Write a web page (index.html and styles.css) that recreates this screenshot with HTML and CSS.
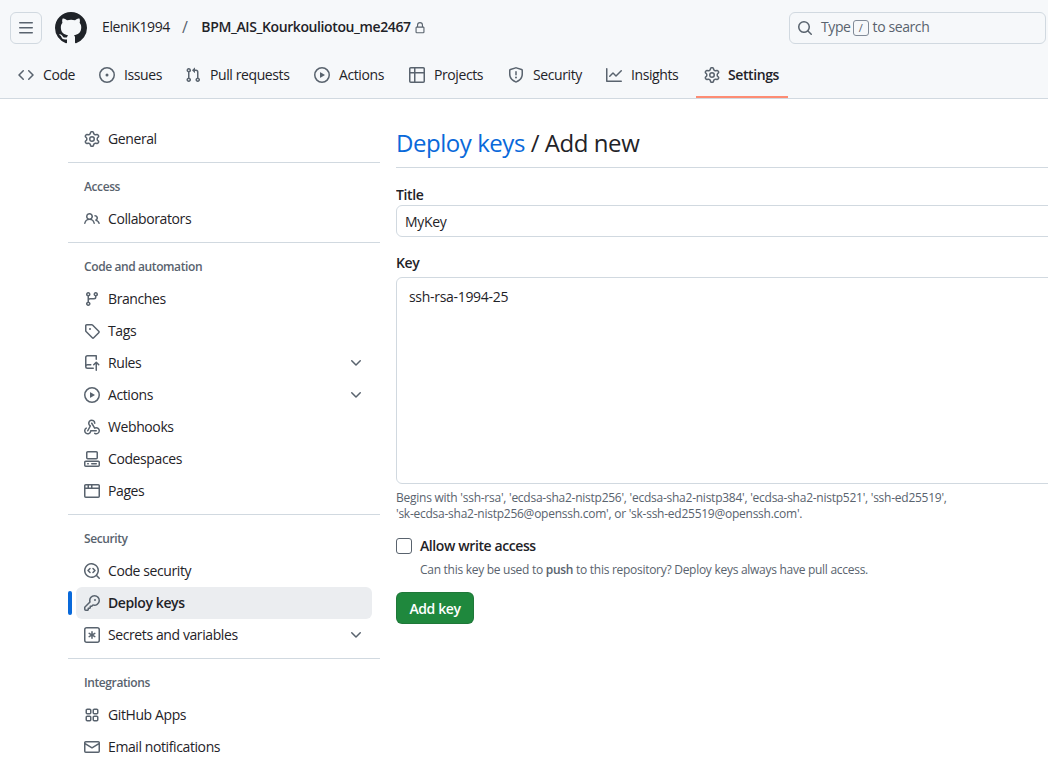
FILE: index.html

```html
<!DOCTYPE html>
<html lang="en">
<head>
  <meta charset="UTF-8">
  <title>Add deploy key</title>
  <link rel="stylesheet" href="styles.css">
</head>
<body>
  <svg class="sprite" xmlns="http://www.w3.org/2000/svg">
    <symbol id="i-bars" viewBox="0 0 16 16"><path d="M1 2.75A.75.75 0 0 1 1.75 2h12.5a.75.75 0 0 1 0 1.5H1.75A.75.75 0 0 1 1 2.75Zm0 5A.75.75 0 0 1 1.75 7h12.5a.75.75 0 0 1 0 1.5H1.75A.75.75 0 0 1 1 7.75ZM1.75 12h12.5a.75.75 0 0 1 0 1.5H1.75a.75.75 0 0 1 0-1.5Z"/></symbol>
    <symbol id="i-mark" viewBox="0 0 16 16"><path d="M8 0c4.42 0 8 3.58 8 8a8.013 8.013 0 0 1-5.45 7.59c-.4.08-.55-.17-.55-.38 0-.27.01-1.13.01-2.2 0-.75-.25-1.23-.54-1.48 1.78-.2 3.65-.88 3.65-3.95 0-.88-.31-1.59-.82-2.15.08-.2.36-1.02-.08-2.12 0 0-.67-.22-2.2.82-.64-.18-1.32-.27-2-.27-.68 0-1.36.09-2 .27-1.53-1.03-2.2-.82-2.2-.82-.44 1.1-.16 1.92-.08 2.12-.51.56-.82 1.28-.82 2.15 0 3.06 1.86 3.75 3.64 3.95-.23.2-.44.55-.51 1.07-.46.21-1.61.55-2.33-.66-.15-.24-.6-.83-1.23-.82-.67.01-.27.38.01.53.34.19.73.9.82 1.13.16.45.68 1.31 2.69.94 0 .67.01 1.3.01 1.49 0 .21-.15.45-.55.38A7.995 7.995 0 0 1 0 8c0-4.42 3.58-8 8-8Z"/></symbol>
    <symbol id="i-lock" viewBox="0 0 16 16"><path d="M4 4a4 4 0 0 1 8 0v2h.25c.966 0 1.75.784 1.75 1.75v5.5A1.75 1.75 0 0 1 12.25 15h-8.5A1.75 1.75 0 0 1 2 13.25v-5.5C2 6.784 2.784 6 3.75 6H4Zm8.25 3.5h-8.5a.25.25 0 0 0-.25.25v5.5c0 .138.112.25.25.25h8.5a.25.25 0 0 0 .25-.25v-5.5a.25.25 0 0 0-.25-.25ZM10.5 6V4a2.5 2.5 0 1 0-5 0v2Z"/></symbol>
    <symbol id="i-search" viewBox="0 0 16 16"><path d="M10.68 11.74a6 6 0 0 1-7.922-8.982 6 6 0 0 1 8.982 7.922l3.04 3.04a.749.749 0 0 1-.326 1.275.749.749 0 0 1-.734-.215ZM11.5 7a4.499 4.499 0 1 0-8.997 0A4.499 4.499 0 0 0 11.5 7Z"/></symbol>
    <symbol id="i-code" viewBox="0 0 16 16"><path d="m11.28 3.22 4.25 4.25a.75.75 0 0 1 0 1.06l-4.25 4.25a.749.749 0 0 1-1.275-.326.749.749 0 0 1 .215-.734L13.94 8l-3.72-3.72a.749.749 0 0 1 .326-1.275.749.749 0 0 1 .734.215Zm-6.56 0a.751.751 0 0 1 1.042.018.751.751 0 0 1 .018 1.042L2.06 8l3.72 3.72a.749.749 0 0 1-.326 1.275.749.749 0 0 1-.734-.215L.47 8.53a.75.75 0 0 1 0-1.06Z"/></symbol>
    <symbol id="i-issue" viewBox="0 0 16 16"><path d="M8 9.5a1.5 1.5 0 1 0 0-3 1.5 1.5 0 0 0 0 3Z"/><path d="M8 0a8 8 0 1 1 0 16A8 8 0 0 1 8 0ZM1.5 8a6.5 6.5 0 1 0 13 0 6.5 6.5 0 0 0-13 0Z"/></symbol>
    <symbol id="i-pr" viewBox="0 0 16 16"><path d="M1.5 3.25a2.25 2.25 0 1 1 3 2.122v5.256a2.251 2.251 0 1 1-1.5 0V5.372A2.25 2.25 0 0 1 1.5 3.25Zm5.677-.177L9.573.677A.25.25 0 0 1 10 .854V2.5h1A2.5 2.5 0 0 1 13.5 5v5.628a2.251 2.251 0 1 1-1.5 0V5a1 1 0 0 0-1-1h-1v1.646a.25.25 0 0 1-.427.177L7.177 3.427a.25.25 0 0 1 0-.354ZM3.75 2.5a.75.75 0 1 0 0 1.5.75.75 0 0 0 0-1.5Zm0 9.5a.75.75 0 1 0 0 1.5.75.75 0 0 0 0-1.5Zm8.25.75a.75.75 0 1 0 1.5 0 .75.75 0 0 0-1.5 0Z"/></symbol>
    <symbol id="i-play" viewBox="0 0 16 16"><path d="M8 0a8 8 0 1 1 0 16A8 8 0 0 1 8 0ZM1.5 8a6.5 6.5 0 1 0 13 0 6.5 6.5 0 0 0-13 0Zm4.879-2.773 4.264 2.559a.25.25 0 0 1 0 .428l-4.264 2.559A.25.25 0 0 1 6 10.559V5.442a.25.25 0 0 1 .379-.215Z"/></symbol>
    <symbol id="i-table" viewBox="0 0 16 16"><path d="M0 1.75C0 .784.784 0 1.75 0h12.5C15.216 0 16 .784 16 1.75v12.5A1.75 1.75 0 0 1 14.25 16H1.75A1.75 1.75 0 0 1 0 14.25ZM6.5 6.5v8h7.75a.25.25 0 0 0 .25-.25V6.5Zm8-1.5V1.75a.25.25 0 0 0-.25-.25H6.5V5Zm-13 1.5v7.75c0 .138.112.25.25.25H5v-8ZM5 5V1.5H1.75a.25.25 0 0 0-.25.25V5Z"/></symbol>
    <symbol id="i-shield" viewBox="0 0 16 16"><path d="M7.467.133a1.748 1.748 0 0 1 1.066 0l5.25 1.68A1.75 1.75 0 0 1 15 3.48V7c0 1.566-.32 3.182-1.303 4.682-.983 1.498-2.585 2.813-5.032 3.855a1.697 1.697 0 0 1-1.33 0c-2.447-1.042-4.049-2.357-5.032-3.855C1.32 10.182 1 8.566 1 7V3.48a1.75 1.75 0 0 1 1.217-1.667Zm.61 1.429a.25.25 0 0 0-.153 0l-5.25 1.68a.25.25 0 0 0-.174.238V7c0 1.358.275 2.666 1.057 3.86.784 1.194 2.121 2.34 4.366 3.297a.196.196 0 0 0 .154 0c2.245-.956 3.582-2.104 4.366-3.298C13.225 9.666 13.5 8.36 13.5 7V3.48a.251.251 0 0 0-.174-.237l-5.25-1.68ZM8.75 4.75v3a.75.75 0 0 1-1.5 0v-3a.75.75 0 0 1 1.5 0ZM9 10.5a1 1 0 1 1-2 0 1 1 0 0 1 2 0Z"/></symbol>
    <symbol id="i-graph" viewBox="0 0 16 16"><path d="M1.5 1.75V13.5h13.75a.75.75 0 0 1 0 1.5H.75a.75.75 0 0 1-.75-.75V1.75a.75.75 0 0 1 1.5 0Zm14.28 2.53-5.25 5.25a.75.75 0 0 1-1.06 0L7 7.06 4.28 9.78a.751.751 0 0 1-1.042-.018.751.751 0 0 1-.018-1.042l3.25-3.25a.75.75 0 0 1 1.06 0L10 7.94l4.72-4.72a.751.751 0 0 1 1.042.018.751.751 0 0 1 .018 1.042Z"/></symbol>
    <symbol id="i-gear" viewBox="0 0 16 16"><path d="M8 0a8.2 8.2 0 0 1 .701.031C9.444.095 9.99.645 10.16 1.29l.288 1.107c.018.066.079.158.212.224.231.114.454.243.668.386.123.082.233.09.299.071l1.103-.303c.644-.176 1.392.021 1.82.63.27.385.506.792.704 1.218.315.675.111 1.422-.364 1.891l-.814.806c-.049.048-.098.147-.088.294.016.257.016.515 0 .772-.01.147.038.246.088.294l.814.806c.475.469.679 1.216.364 1.891a7.977 7.977 0 0 1-.704 1.217c-.428.61-1.176.807-1.82.63l-1.102-.302c-.067-.019-.177-.011-.3.071a5.909 5.909 0 0 1-.668.386c-.133.066-.194.158-.211.224l-.29 1.106c-.168.646-.715 1.196-1.458 1.26a8.006 8.006 0 0 1-1.402 0c-.743-.064-1.289-.614-1.458-1.26l-.289-1.106c-.018-.066-.079-.158-.212-.224a5.738 5.738 0 0 1-.668-.386c-.123-.082-.233-.09-.299-.071l-1.103.303c-.644.176-1.392-.021-1.82-.63a8.12 8.12 0 0 1-.704-1.218c-.315-.675-.111-1.422.363-1.891l.815-.806c.05-.048.098-.147.088-.294a6.214 6.214 0 0 1 0-.772c.01-.147-.038-.246-.088-.294l-.815-.806C.635 6.045.431 5.298.746 4.623a7.92 7.92 0 0 1 .704-1.217c.428-.61 1.176-.807 1.82-.63l1.102.302c.067.019.177.011.3-.071.214-.143.437-.272.668-.386.133-.066.194-.158.211-.224l.29-1.106C6.009.645 6.556.095 7.299.03 7.53.01 7.764 0 8 0Zm-.571 1.525c-.036.003-.108.036-.137.146l-.289 1.105c-.147.561-.549.967-.998 1.189-.173.086-.34.183-.5.29-.417.278-.97.423-1.529.27l-1.103-.303c-.109-.03-.175.016-.195.045-.22.312-.412.644-.573.99-.014.031-.021.11.059.19l.815.806c.411.406.562.957.53 1.456a4.709 4.709 0 0 0 0 .582c.032.499-.119 1.05-.53 1.456l-.815.806c-.081.08-.073.159-.059.19.162.346.353.677.573.989.02.03.085.076.195.046l1.102-.303c.56-.153 1.113-.008 1.53.27.161.107.328.204.501.29.447.222.85.629.997 1.189l.289 1.105c.029.109.101.143.137.146a6.6 6.6 0 0 0 1.142 0c.036-.003.108-.036.137-.146l.289-1.105c.147-.561.549-.967.998-1.189.173-.086.34-.183.5-.29.417-.278.97-.423 1.529-.27l1.103.303c.109.029.175-.016.195-.045.22-.313.411-.644.573-.99.014-.031.021-.11-.059-.19l-.815-.806c-.411-.406-.562-.957-.53-1.456a4.709 4.709 0 0 0 0-.582c-.032-.499.119-1.05.53-1.456l.815-.806c.081-.08.073-.159.059-.19a6.464 6.464 0 0 0-.573-.989c-.02-.03-.085-.076-.195-.046l-1.102.303c-.56.153-1.113.008-1.53-.27a4.44 4.44 0 0 0-.501-.29c-.447-.222-.85-.629-.997-1.189l-.289-1.105c-.029-.11-.101-.143-.137-.146a6.6 6.6 0 0 0-1.142 0ZM11 8a3 3 0 1 1-6 0 3 3 0 0 1 6 0ZM9.5 8a1.5 1.5 0 1 0-3.001.001A1.5 1.5 0 0 0 9.5 8Z"/></symbol>
    <symbol id="i-people" viewBox="0 0 16 16"><path d="M2 5.5a3.5 3.5 0 1 1 5.898 2.549 5.508 5.508 0 0 1 3.034 4.084.75.75 0 1 1-1.482.235 4 4 0 0 0-7.9 0 .75.75 0 0 1-1.482-.236A5.507 5.507 0 0 1 3.102 8.05 3.493 3.493 0 0 1 2 5.5ZM11 4a3.001 3.001 0 0 1 2.22 5.018 5.01 5.01 0 0 1 2.56 3.012.749.749 0 0 1-.885.954.752.752 0 0 1-.549-.514 3.507 3.507 0 0 0-2.522-2.372.75.75 0 0 1-.574-.73v-.352a.75.75 0 0 1 .416-.672A1.5 1.5 0 0 0 11 5.5.75.75 0 0 1 11 4Zm-5.5-.5a2 2 0 1 0-.001 3.999A2 2 0 0 0 5.5 3.5Z"/></symbol>
    <symbol id="i-branch" viewBox="0 0 16 16"><path d="M9.5 3.25a2.25 2.25 0 1 1 3 2.122V6A2.5 2.5 0 0 1 10 8.5H6a1 1 0 0 0-1 1v1.128a2.251 2.251 0 1 1-1.5 0V5.372a2.25 2.25 0 1 1 1.5 0v1.836A2.493 2.493 0 0 1 6 7h4a1 1 0 0 0 1-1v-.628A2.25 2.25 0 0 1 9.5 3.25Zm-6 0a.75.75 0 1 0 1.5 0 .75.75 0 0 0-1.5 0Zm8.25-.75a.75.75 0 1 0 0 1.5.75.75 0 0 0 0-1.5ZM4.25 12a.75.75 0 1 0 0 1.5.75.75 0 0 0 0-1.5Z"/></symbol>
    <symbol id="i-tag" viewBox="0 0 16 16"><path d="M1 7.775V2.75C1 1.784 1.784 1 2.75 1h5.025c.464 0 .91.184 1.238.513l6.25 6.25a1.75 1.75 0 0 1 0 2.474l-5.026 5.026a1.75 1.75 0 0 1-2.474 0l-6.25-6.25A1.752 1.752 0 0 1 1 7.775Zm1.5 0c0 .066.026.13.073.177l6.25 6.25a.25.25 0 0 0 .354 0l5.025-5.025a.25.25 0 0 0 0-.354l-6.25-6.25a.25.25 0 0 0-.177-.073H2.75a.25.25 0 0 0-.25.25ZM6 5a1 1 0 1 1 0 2 1 1 0 0 1 0-2Z"/></symbol>
    <symbol id="i-push" viewBox="0 0 16 16"><path d="M1 2.5A2.5 2.5 0 0 1 3.5 0h8.75a.75.75 0 0 1 .75.75v3.5a.75.75 0 0 1-1.5 0V1.5h-8a1 1 0 0 0-1 1v6.708A2.493 2.493 0 0 1 3.5 9h3.25a.75.75 0 0 1 0 1.5H3.5a1 1 0 0 0 0 2h5.75a.75.75 0 0 1 0 1.5H3.5A2.5 2.5 0 0 1 1 11.5Zm13.23 7.79h-.001l-1.224-1.224v6.184a.75.75 0 0 1-1.5 0V9.066L10.28 10.29a.75.75 0 0 1-1.06-1.061l2.505-2.504a.75.75 0 0 1 1.06 0L15.29 9.23a.751.751 0 0 1-.018 1.042.751.751 0 0 1-1.042.018Z"/></symbol>
    <symbol id="i-webhook" viewBox="0 0 16 16"><path d="M5.5 4.25a2.25 2.25 0 0 1 4.5 0 .75.75 0 0 0 1.5 0 3.75 3.75 0 1 0-6.14 2.889l-2.272 4.258a.75.75 0 0 0 1.324.706L7 7.25a.75.75 0 0 0-.309-1.015A2.25 2.25 0 0 1 5.5 4.25Z"/><path d="M7.364 3.607a.75.75 0 0 1 1.03.257l2.608 4.349a3.75 3.75 0 1 1-.628 6.785.75.75 0 0 1 .752-1.299 2.25 2.25 0 1 0-.033-3.88.75.75 0 0 1-1.03-.256L7.107 4.636a.75.75 0 0 1 .257-1.03Z"/><path d="M2.9 8.776A.75.75 0 0 1 2.625 9.8 2.25 2.25 0 1 0 6 11.75a.75.75 0 0 1 .75-.751h5.5a.75.75 0 0 1 0 1.5H7.425a3.751 3.751 0 1 1-5.55-3.998.75.75 0 0 1 1.024.274Z"/></symbol>
    <symbol id="i-codespaces" viewBox="0 0 16 16"><path d="M0 11.25c0-.966.784-1.75 1.75-1.75h12.5c.966 0 1.75.784 1.75 1.75v3A1.75 1.75 0 0 1 14.25 16H1.75A1.75 1.75 0 0 1 0 14.25Zm2-9.5C2 .784 2.784 0 3.75 0h8.5C13.216 0 14 .784 14 1.75v5a1.75 1.75 0 0 1-1.75 1.75h-8.5A1.75 1.75 0 0 1 2 6.75Zm1.75-.25a.25.25 0 0 0-.25.25v5c0 .138.112.25.25.25h8.5a.25.25 0 0 0 .25-.25v-5a.25.25 0 0 0-.25-.25Zm-2 9.5a.25.25 0 0 0-.25.25v3c0 .138.112.25.25.25h12.5a.25.25 0 0 0 .25-.25v-3a.25.25 0 0 0-.25-.25Z"/><path d="M7 12.75a.75.75 0 0 1 .75-.75h4.5a.75.75 0 0 1 0 1.5h-4.5a.75.75 0 0 1-.75-.75Zm-4 0a.75.75 0 0 1 .75-.75h.5a.75.75 0 0 1 0 1.5h-.5a.75.75 0 0 1-.75-.75Z"/></symbol>
    <symbol id="i-browser" viewBox="0 0 16 16"><path d="M0 2.75C0 1.784.784 1 1.75 1h12.5c.966 0 1.75.784 1.75 1.75v10.5A1.75 1.75 0 0 1 14.25 15H1.75A1.75 1.75 0 0 1 0 13.25ZM14.5 6h-13v7.25c0 .138.112.25.25.25h12.5a.25.25 0 0 0 .25-.25Zm-6-3.5v2h6V2.75a.25.25 0 0 0-.25-.25ZM5 2.5v2h2v-2Zm-3.25 0a.25.25 0 0 0-.25.25V4.5H3.5v-2Z"/></symbol>
    <symbol id="i-codescan" viewBox="0 0 16 16"><path d="M8.47 4.97a.75.75 0 0 0 0 1.06L9.94 7.5 8.47 8.97a.75.75 0 1 0 1.06 1.06l2-2a.75.75 0 0 0 0-1.06l-2-2a.75.75 0 0 0-1.06 0ZM6.53 6.03a.75.75 0 0 0-1.06-1.06l-2 2a.75.75 0 0 0 0 1.06l2 2a.75.75 0 1 0 1.06-1.06L5.06 7.5l1.47-1.47Z"/><path d="M12.246 13.307a7.501 7.501 0 1 1 1.06-1.06l2.474 2.473a.749.749 0 0 1-.326 1.275.749.749 0 0 1-.734-.215ZM1.5 7.5a6.002 6.002 0 0 0 3.608 5.504 6.002 6.002 0 0 0 6.486-1.117.748.748 0 0 1 .292-.293A6 6 0 1 0 1.5 7.5Z"/></symbol>
    <symbol id="i-key" viewBox="0 0 16 16"><path d="M10.5 0a5.499 5.499 0 1 1-1.288 10.848l-.932.932a.749.749 0 0 1-.53.22H7v.75a.749.749 0 0 1-.22.53l-.5.5a.749.749 0 0 1-.53.22H5v.75a.749.749 0 0 1-.22.53l-.5.5a.749.749 0 0 1-.53.22h-2A1.75 1.75 0 0 1 0 14.25v-2c0-.199.079-.389.22-.53l4.932-4.932A5.5 5.5 0 0 1 10.5 0Zm-4 5.5c-.001.431.069.86.205 1.269a.75.75 0 0 1-.181.768L1.5 12.56v1.69c0 .138.112.25.25.25h1.69l.06-.06v-1.19a.75.75 0 0 1 .75-.75h1.19l.06-.06v-1.19a.75.75 0 0 1 .75-.75h1.19l1.023-1.025a.75.75 0 0 1 .768-.18A4 4 0 1 0 6.5 5.5ZM11 6a1 1 0 1 1 0-2 1 1 0 0 1 0 2Z"/></symbol>
    <symbol id="i-asterisk" viewBox="0 0 16 16"><path d="M0 2.75A2.75 2.75 0 0 1 2.75 0h10.5A2.75 2.75 0 0 1 16 2.75v10.5A2.75 2.75 0 0 1 13.25 16H2.75A2.75 2.75 0 0 1 0 13.25ZM2.75 1.5c-.69 0-1.25.56-1.25 1.25v10.5c0 .69.56 1.25 1.25 1.25h10.5c.69 0 1.25-.56 1.25-1.25V2.75c0-.69-.56-1.25-1.25-1.25Z"/><path d="M8 4a.75.75 0 0 1 .75.75V6.7l1.69-.975a.75.75 0 0 1 .75 1.3L9.5 8l1.69.976a.75.75 0 0 1-.75 1.298L8.75 9.3v1.951a.75.75 0 0 1-1.5 0V9.299l-1.69.976a.75.75 0 0 1-.75-1.3L6.5 8l-1.69-.975a.75.75 0 0 1 .75-1.3l1.69.976V4.75A.75.75 0 0 1 8 4Z"/></symbol>
    <symbol id="i-apps" viewBox="0 0 16 16"><path d="M1.5 3.25c0-.966.784-1.75 1.75-1.75h2.5c.966 0 1.75.784 1.75 1.75v2.5A1.75 1.75 0 0 1 5.75 7.5h-2.5A1.75 1.75 0 0 1 1.5 5.75Zm7 0c0-.966.784-1.75 1.75-1.75h2.5c.966 0 1.75.784 1.75 1.75v2.5a1.75 1.75 0 0 1-1.75 1.75h-2.5A1.75 1.75 0 0 1 8.5 5.75Zm-7 7c0-.966.784-1.75 1.75-1.75h2.5c.966 0 1.75.784 1.75 1.75v2.5a1.75 1.75 0 0 1-1.75 1.75h-2.5a1.75 1.75 0 0 1-1.75-1.75Zm7 0c0-.966.784-1.75 1.75-1.75h2.5c.966 0 1.75.784 1.75 1.75v2.5a1.75 1.75 0 0 1-1.75 1.75h-2.5a1.75 1.75 0 0 1-1.75-1.75ZM3.25 3a.25.25 0 0 0-.25.25v2.5c0 .138.112.25.25.25h2.5A.25.25 0 0 0 6 5.75v-2.5A.25.25 0 0 0 5.75 3Zm7 0a.25.25 0 0 0-.25.25v2.5c0 .138.112.25.25.25h2.5a.25.25 0 0 0 .25-.25v-2.5a.25.25 0 0 0-.25-.25ZM3.25 10a.25.25 0 0 0-.25.25v2.5c0 .138.112.25.25.25h2.5a.25.25 0 0 0 .25-.25v-2.5a.25.25 0 0 0-.25-.25Zm7 0a.25.25 0 0 0-.25.25v2.5c0 .138.112.25.25.25h2.5a.25.25 0 0 0 .25-.25v-2.5a.25.25 0 0 0-.25-.25Z"/></symbol>
    <symbol id="i-mail" viewBox="0 0 16 16"><path d="M1.75 2h12.5c.966 0 1.75.784 1.75 1.75v8.5A1.75 1.75 0 0 1 14.25 14H1.75A1.75 1.75 0 0 1 0 12.25v-8.5C0 2.784.784 2 1.75 2ZM1.5 12.251c0 .138.112.25.25.25h12.5a.25.25 0 0 0 .25-.25V5.809L8.38 9.397a.75.75 0 0 1-.76 0L1.5 5.809v6.442Zm13-8.181v-.32a.25.25 0 0 0-.25-.25H1.75a.25.25 0 0 0-.25.25v.32L8 7.88Z"/></symbol>
    <symbol id="i-chevron" viewBox="0 0 16 16"><path d="M12.78 5.22a.749.749 0 0 1 0 1.06l-4.25 4.25a.749.749 0 0 1-1.06 0L3.22 6.28a.749.749 0 1 1 1.06-1.06L8 8.939l3.72-3.719a.749.749 0 0 1 1.06 0Z"/></symbol>
  </svg>

  <header class="header">
    <div class="top-row">
      <button class="menu-btn"><svg class="icon"><use href="#i-bars"/></svg></button>
      <svg class="logo"><use href="#i-mark"/></svg>
      <a class="owner top-text">EleniK1994</a>
      <span class="slash top-text">/</span>
      <a class="repo top-text">BPM_AIS_Kourkouliotou_me2467</a>
      <svg class="lock"><use href="#i-lock"/></svg>
      <div class="search">
        <svg class="icon"><use href="#i-search"/></svg>
        <span class="top-text">Type</span><kbd>/</kbd><span class="top-text">to search</span>
      </div>
    </div>
    <nav class="tabs">
      <a class="tab"><svg class="icon"><use href="#i-code"/></svg><span class="label">Code</span></a>
      <a class="tab"><svg class="icon"><use href="#i-issue"/></svg><span class="label">Issues</span></a>
      <a class="tab"><svg class="icon"><use href="#i-pr"/></svg><span class="label">Pull requests</span></a>
      <a class="tab"><svg class="icon"><use href="#i-play"/></svg><span class="label">Actions</span></a>
      <a class="tab"><svg class="icon"><use href="#i-table"/></svg><span class="label">Projects</span></a>
      <a class="tab"><svg class="icon"><use href="#i-shield"/></svg><span class="label">Security</span></a>
      <a class="tab"><svg class="icon"><use href="#i-graph"/></svg><span class="label">Insights</span></a>
      <a class="tab selected"><svg class="icon"><use href="#i-gear"/></svg><span class="label">Settings</span></a>
    </nav>
  </header>

  <div class="layout">
    <aside class="sidebar">
      <a class="side-item"><svg class="icon"><use href="#i-gear"/></svg><span class="label">General</span></a>
      <hr class="side-sep">
      <h3 class="side-title">Access</h3>
      <a class="side-item"><svg class="icon"><use href="#i-people"/></svg><span class="label">Collaborators</span></a>
      <hr class="side-sep">
      <h3 class="side-title">Code and automation</h3>
      <a class="side-item"><svg class="icon"><use href="#i-branch"/></svg><span class="label">Branches</span></a>
      <a class="side-item"><svg class="icon"><use href="#i-tag"/></svg><span class="label">Tags</span></a>
      <a class="side-item"><svg class="icon"><use href="#i-push"/></svg><span class="label">Rules</span><svg class="icon chevron"><use href="#i-chevron"/></svg></a>
      <a class="side-item"><svg class="icon"><use href="#i-play"/></svg><span class="label">Actions</span><svg class="icon chevron"><use href="#i-chevron"/></svg></a>
      <a class="side-item"><svg class="icon"><use href="#i-webhook"/></svg><span class="label">Webhooks</span></a>
      <a class="side-item"><svg class="icon"><use href="#i-codespaces"/></svg><span class="label">Codespaces</span></a>
      <a class="side-item"><svg class="icon"><use href="#i-browser"/></svg><span class="label">Pages</span></a>
      <hr class="side-sep">
      <h3 class="side-title">Security</h3>
      <a class="side-item"><svg class="icon"><use href="#i-codescan"/></svg><span class="label">Code security</span></a>
      <a class="side-item active"><svg class="icon"><use href="#i-key"/></svg><span class="label">Deploy keys</span></a>
      <a class="side-item"><svg class="icon"><use href="#i-asterisk"/></svg><span class="label">Secrets and variables</span><svg class="icon chevron"><use href="#i-chevron"/></svg></a>
      <hr class="side-sep">
      <h3 class="side-title">Integrations</h3>
      <a class="side-item"><svg class="icon"><use href="#i-apps"/></svg><span class="label">GitHub Apps</span></a>
      <a class="side-item"><svg class="icon"><use href="#i-mail"/></svg><span class="label">Email notifications</span></a>
    </aside>

    <main class="content">
      <h2 class="page-title"><a>Deploy keys</a> / Add new</h2>
      <form class="key-form">
        <label class="field-label" for="title">Title</label>
        <input class="text-input" id="title" type="text" value="MyKey">
        <label class="field-label key-label" for="key">Key</label>
        <textarea class="key-input" id="key">ssh-rsa-1994-25</textarea>
        <p class="hint">Begins with 'ssh-rsa', 'ecdsa-sha2-nistp256', 'ecdsa-sha2-nistp384', 'ecdsa-sha2-nistp521', 'ssh-ed25519',<br>'sk-ecdsa-sha2-nistp256@openssh.com', or 'sk-ssh-ed25519@openssh.com'.</p>
        <div class="check-row">
          <span class="checkbox"></span>
          <span class="check-label">Allow write access</span>
        </div>
        <p class="check-note">Can this key be used to <strong>push</strong> to this repository? Deploy keys always have pull access.</p>
        <button class="add-btn" type="button">Add key</button>
      </form>
    </main>
  </div>
</body>
</html>
```

FILE: styles.css

```css
* {
  box-sizing: border-box;
}
html, body {
  height: 763px;
  overflow: hidden;
}
body {
  margin: 0;
  background-color: #fff;
  color: #1f2328;
  font-family: "Open Sans", "Noto Sans", sans-serif;
  font-size: 14px;
  letter-spacing: -0.4px;
}
.sprite {
  display: none;
}
.icon {
  width: 16px;
  height: 16px;
  flex: none;
  fill: #59636e;
}
.label {
  margin-top: -2px;
}

/* header */
.header {
  height: 99px;
  background-color: #f6f8fa;
  border-bottom: 1px solid #d1d9e0;
}
.top-row {
  display: flex;
  align-items: center;
  height: 44px;
  padding: 12px 2px 0 10px;
}
.top-text {
  margin-top: -3px;
}
.menu-btn {
  display: flex;
  align-items: center;
  justify-content: center;
  width: 32px;
  height: 32px;
  padding: 0;
  background: transparent;
  border: 1px solid #d1d9e0;
  border-radius: 6px;
}
.logo {
  width: 32px;
  height: 32px;
  margin-left: 13px;
  fill: #1f2328;
}
.owner {
  margin-left: 15px;
}
.slash {
  margin-left: 12px;
  margin-right: 14px;
  color: #59636e;
  font-size: 16px;
}
.repo {
  font-weight: 600;
}
.lock {
  width: 12px;
  height: 12px;
  margin-left: 3px;
  margin-top: -1px;
  fill: #59636e;
}
.search {
  display: flex;
  align-items: center;
  width: 257px;
  height: 32px;
  margin-left: auto;
  padding-left: 7px;
  color: #59636e;
  border: 1px solid #d1d9e0;
  border-radius: 6px;
}
.search .icon {
  margin-right: 8px;
}
.search kbd {
  width: 16px;
  height: 16px;
  margin: -1px 4px 0 2px;
  font: 11px "Open Sans", sans-serif;
  line-height: 14px;
  text-align: center;
  border: 1px solid #818b98;
  border-radius: 3px;
}
.tabs {
  display: grid;
  grid-template-columns: 81px 86px 129px 95px 99px 98px 98px 92px;
  height: 54px;
  padding: 8px 0 0 10px;
}
.tab {
  position: relative;
  display: flex;
  align-items: center;
  gap: 9px;
  padding: 0 8px;
  white-space: nowrap;
}
.tab.selected {
  gap: 8px;
  font-weight: 600;
}
.tab.selected::after {
  content: "";
  position: absolute;
  left: 0;
  right: 0;
  bottom: 0;
  height: 2px;
  background-color: #fd8c73;
}

/* page */
.layout {
  display: flex;
  padding: 24px 0 0 68px;
}
.sidebar {
  flex: none;
  width: 312px;
  margin-right: 16px;
}
.side-item {
  position: relative;
  display: flex;
  align-items: center;
  gap: 8px;
  height: 32px;
  margin: 0 8px;
  padding: 0 8px;
  border-radius: 6px;
  white-space: nowrap;
}
.side-item.active {
  background-color: #ebedf0;
  font-weight: 600;
}
.side-item.active::before {
  content: "";
  position: absolute;
  left: -8px;
  top: 4px;
  width: 4px;
  height: 24px;
  background-color: #0969da;
  border-radius: 6px;
}
.chevron {
  margin-left: auto;
}
.side-sep {
  height: 1px;
  margin: 7px 0 8px;
  background-color: #d1d9e0;
  border: 0;
}
.side-title {
  height: 32px;
  margin: 0;
  padding: 0 16px;
  color: #59636e;
  font-size: 12px;
  font-weight: 600;
  line-height: 32px;
}

/* form, cut off by the window on the right */
.content {
  flex: none;
  width: 652px;
  overflow: hidden;
}
.page-title,
.key-form {
  width: 800px;
}
.page-title {
  height: 45px;
  margin: 0;
  font-size: 24px;
  font-weight: 400;
  line-height: 40px;
  letter-spacing: -0.45px;
  border-bottom: 1px solid #d1d9e0;
}
.page-title a {
  color: #0969da;
}
.key-form {
  padding-top: 17px;
}
.field-label {
  display: block;
  height: 20px;
  font-weight: 600;
  line-height: 20px;
}
.key-label {
  margin-top: 16px;
  margin-bottom: 4px;
}
.text-input,
.key-input {
  display: block;
  width: 100%;
  color: #1f2328;
  font: inherit;
  letter-spacing: -0.3px;
  background: #fff;
  border: 1px solid #d1d9e0;
  border-radius: 6px;
  outline: none;
}
.text-input {
  height: 32px;
  padding: 0 8px;
}
.key-input {
  height: 207px;
  padding: 9px 12px;
  line-height: 20px;
  resize: none;
}
.hint {
  margin: 6px 0 0;
  color: #59636e;
  font-size: 12px;
  line-height: 16px;
  letter-spacing: -0.25px;
}
.check-row {
  display: flex;
  align-items: center;
  gap: 8px;
  height: 20px;
  margin-top: 14px;
}
.checkbox {
  width: 16px;
  height: 16px;
  background: #fff;
  border: 1px solid #59636e;
  border-radius: 3px;
}
.check-label {
  margin-top: -2px;
  font-weight: 600;
}
.check-note {
  margin: 6px 0 0 24px;
  color: #59636e;
  font-size: 12px;
  line-height: 16px;
  letter-spacing: -0.28px;
}
.check-note strong {
  font-weight: 600;
}
.add-btn {
  display: block;
  width: 78px;
  height: 32px;
  margin-top: 14px;
  padding: 0;
  color: #fff;
  font: inherit;
  font-weight: 600;
  letter-spacing: inherit;
  background-color: #1f883d;
  border: 1px solid rgba(31, 35, 40, 0.15);
  border-radius: 6px;
}
```
